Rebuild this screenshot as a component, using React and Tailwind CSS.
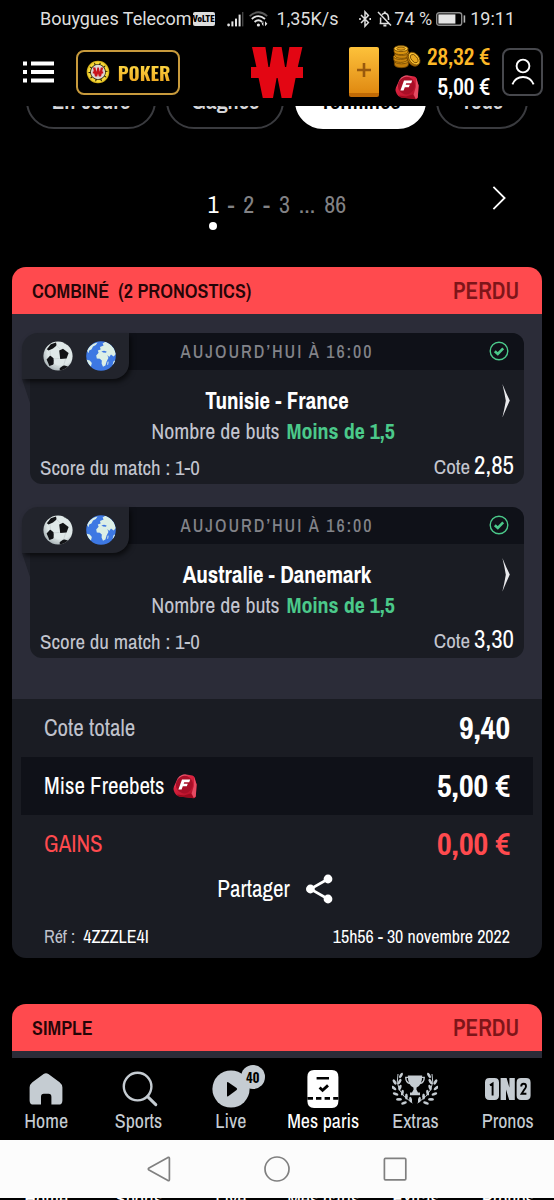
import React from "react";

function Ball() {
  return (
    <svg viewBox="0 0 30 30" className="size-[30px] shrink-0" aria-hidden="true">
      <defs>
        <clipPath id="ballClip"><circle cx="15" cy="15" r="14.6" /></clipPath>
        <radialGradient id="ballShade" cx="0.6" cy="0.35" r="0.75">
          <stop offset="0.6" stopColor="#dfe8e8" />
          <stop offset="1" stopColor="#98a2a6" />
        </radialGradient>
      </defs>
      <circle cx="15" cy="15" r="14.6" fill="url(#ballShade)" />
      <g clipPath="url(#ballClip)" fill="#121316">
        <path d="M16.2 9.6 20 7.8 25.6 12 23.6 17.6 17.2 18z" />
        <path d="M3.6 18.4 7.2 14.6 10.8 17.4 10.6 23.4 6.4 25z" />
        <path d="M3.8 8.2 7.8 3.2 13 1.6 13.6 4.4 10 7.4 5.6 9.6z" />
        <path d="M16.6 27.2 20.6 24.2 25 25.6 22 30.4 17 30.4z" />
        <path d="M20.4-.2 25.6 3 23.4 3.6 20.4 1.8z" />
      </g>
      <path d="M13.4 4.2 17.8 8.6M10.4 18 16.6 17.4M20.6 24.6 22.6 18M10 23.6 16.8 26.8M7.4 14.6 7 9.6" fill="none" stroke="#c6cfd1" strokeWidth="0.8" />
    </svg>
  );
}

function Globe() {
  return (
    <svg viewBox="0 0 30 30" className="size-[30px] shrink-0" aria-hidden="true">
      <defs>
        <clipPath id="globeClip"><circle cx="15" cy="15" r="14.8" /></clipPath>
      </defs>
      <circle cx="15" cy="15" r="14.8" fill="#3d78e3" />
      <g clipPath="url(#globeClip)" fill="#dcefe6">
        <path d="M10.2 14.4 12.6 11.8 11.8 9.4 14.6 8.6 14 6 17.6 4.6 16.6 2.6 19.4.8 24 3 28 7.4 30 13 27.6 15.4 25 13.4 23.2 16 21.4 14 22.4 17 20.6 20.6 19.4 24.4 17 25.8 15.6 22.4 15.8 19.6 13.8 17.8 10.8 17.6z" />
        <path d="M1 9.6 3.4 5.8 7.4 2.8 11.6 1.4 9.8 4 7 5.4 5.4 8.4 3.2 9.6 2.4 12.2z" />
        <path d="M0 18.4 3.8 19.4 5.8 22 5 25.4 3 24z" />
        <path d="M21.6 20.8 22.6 20.4 22.2 23.4 21.2 24z" />
        <path d="M27.4 20.6 29.6 19 28 23.4 26.6 24z" />
      </g>
      <path d="M15.4 10.6 18 9.8 20.6 10.6 20 11.8 17.2 11.4z" fill="#3d78e3" />
    </svg>
  );
}

function Freebet() {
  return (
    <svg viewBox="0 0 24 25" className="h-[25px] w-6 shrink-0" aria-hidden="true">
      <defs>
        <linearGradient id="gemBody" x1="0" y1="0" x2="0.7" y2="1">
          <stop offset="0" stopColor="#f58aa0" />
          <stop offset="0.4" stopColor="#dc2440" />
          <stop offset="1" stopColor="#b00d26" />
        </linearGradient>
      </defs>
      <path d="M8.4 1.2Q10.4.2 13 .4L19.4 1.4Q21 1.8 21.6 3.4L23.6 10.4 22.8 22.6Q22.4 24.4 20.4 24.2L16 23.8 6 22.4Q3 21.6 1.8 19L.6 16Q.2 14.4 1 12.4L4.6 4.4Q6 2 8.4 1.2z" fill="url(#gemBody)" />
      <path d="M21 3 23.6 10.4 22.8 22.6 20.8 24 18.6 19.4 20.8 12z" fill="#e64a62" />
      <path d="M4 20.4 11 21.4 17.8 19.6 20.4 24 6 22.4z" fill="#9a0a1e" />
      <ellipse cx="11.4" cy="10.6" rx="8.4" ry="8.8" transform="rotate(20 11.4 10.6)" fill="#a80f27" />
      <path d="M9 5.6H17.2L16.2 8.2H11.2L10.7 9.7H14.8L13.8 12.2H9.8L8.6 15.4H5.4z" fill="#fff" />
    </svg>
  );
}

function Coins() {
  return (
    <svg viewBox="0 0 28 24" className="h-6 w-7 shrink-0" aria-hidden="true">
      <g stroke="#6d4300" strokeWidth="0.8">
        <path d="M1.4 15.8v3.6c0 4.4 14 4.4 14 0v-3.6z" fill="#c07c0a" />
        <ellipse cx="8.4" cy="16" rx="7" ry="2.8" fill="#e9a51c" />
        <path d="M.6 11.4v3c0 4 14 4 14 0v-3z" fill="#c9850d" />
        <ellipse cx="7.6" cy="11.6" rx="7" ry="2.8" fill="#efac20" />
        <path d="M1.8 7.4v3c0 4 14 4 14 0v-3z" fill="#c9850d" />
        <ellipse cx="8.8" cy="7.6" rx="7" ry="2.8" fill="#f5b62a" />
        <path d="M1 3.6v3c0 4 14 4 14 0v-3z" fill="#d8930f" />
        <ellipse cx="8" cy="3.6" rx="7" ry="3" fill="#fbc538" />
        <ellipse cx="8" cy="3.6" rx="4.2" ry="1.6" fill="#e4a01a" />
        <ellipse cx="20" cy="14.6" rx="5" ry="7.4" transform="rotate(-38 20 14.6)" fill="#b87408" />
        <ellipse cx="21.2" cy="13.6" rx="4.8" ry="7.2" transform="rotate(-38 21.2 13.6)" fill="#f8be32" />
        <ellipse cx="21.2" cy="13.6" rx="2.8" ry="4.8" transform="rotate(-38 21.2 13.6)" fill="#e9a820" />
      </g>
    </svg>
  );
}

function StatusBar() {
  return (
    <div className="flex h-[38px] items-center justify-between whitespace-nowrap bg-black pl-10 pr-[39px] font-['Roboto',sans-serif] text-[18px] leading-6 text-[#dedede]">
      <div className="flex items-center">
        <span>Bouygues Telecom</span>
        <span className="ml-px flex h-[14px] w-[22px] items-center justify-center rounded-xs bg-[#dedede] font-['Roboto_Condensed',sans-serif] text-[9px] font-black leading-none text-black">VoLTE</span>
        <svg viewBox="0 0 42 18" className="ml-3 h-[18px] w-[42px]" aria-hidden="true">
          <g fill="#e4e4e4">
            <circle cx="1.6" cy="15" r="1.4" />
            <rect x="4.4" y="11.4" width="2" height="5" />
            <rect x="8" y="8.6" width="2" height="7.8" />
            <rect x="11.6" y="4.6" width="2" height="11.8" />
            <rect x="15" y="2" width="1.4" height="14.4" fill="#444" />
          </g>
          <g fill="none" strokeWidth="1.8">
            <path d="M22.6 6.2Q31.4-1.6 40.2 6.2" stroke="#5a5a5a" />
            <path d="M24.8 9Q31.4 3.2 38 9" stroke="#e4e4e4" />
            <path d="M27.6 12Q31.4 8.6 35.2 12" stroke="#e4e4e4" />
          </g>
          <circle cx="31.4" cy="15" r="1.6" fill="#e4e4e4" />
          <path d="M36.4 11.2v5l-1.8-2.5zM38 11.2v5l2.4-2.5z" fill="#e4e4e4" />
        </svg>
        <span className="ml-2">1,35K/s</span>
      </div>
      <div className="flex items-center">
        <svg viewBox="0 0 34 18" className="h-[18px] w-[34px]" aria-hidden="true">
          <g fill="none" stroke="#dedede" strokeWidth="1.5">
            <path d="M3 5 10.4 12.6 7 16.2V1.8L10.4 5.4 3 13" />
            <path d="M1.2 9h1.6M11.4 9H13" strokeWidth="2" />
            <path d="M20 2 33 15.4M21.6 13.4H31M22.6 13V7.6M24 4.6Q26.6 2 29.4 4.4 30.6 5.6 30.6 10" />
            <path d="M25.4 15.6H28.4M26.8 1.6V3" strokeWidth="2" />
          </g>
        </svg>
        <span className="ml-0.5">74 %</span>
        <svg viewBox="0 0 30 14" className="ml-1 h-3.5 w-[30px]" aria-hidden="true">
          <rect x="0.7" y="0.7" width="25" height="12.6" rx="2.4" fill="none" stroke="#8d8d8d" strokeWidth="1.4" />
          <rect x="2.4" y="2.4" width="17" height="9.2" fill="#e4e4e4" />
          <rect x="27.6" y="3.4" width="1.6" height="7.2" fill="#b5b5b5" />
        </svg>
        <span className="ml-1">19:11</span>
      </div>
    </div>
  );
}

function Header() {
  return (
    <header className="grid h-[68px] grid-cols-[1fr_auto_1fr] items-center bg-black px-[11px]">
      <div className="flex items-center pl-3">
        <button aria-label="Menu">
          <svg viewBox="0 0 31 22" className="h-[22px] w-[31px]" fill="#fff" aria-hidden="true">
            <path d="M0 .4h4v4H0zM8 .4h23v4H8zM0 9h4v4H0zM8 9h23v4H8zM0 17.6h4v4H0zM8 17.6h23v4H8z" />
          </svg>
        </button>
        <a href="#poker" className="ml-[22px] flex h-[45px] w-[104px] items-center justify-center gap-2 rounded-lg border-2 border-[#c79a3c] font-['Oswald',sans-serif]">
          <svg viewBox="0 0 24 24" className="size-6" aria-hidden="true">
            <circle cx="12" cy="12" r="10.4" fill="#1a1400" stroke="#d9b41c" strokeWidth="1.8" />
            <circle cx="12" cy="12" r="9" fill="none" stroke="#f4d83a" strokeWidth="2.4" strokeDasharray="4.6 1" />
            <circle cx="12" cy="12" r="7.2" fill="#ddd6d2" />
            <path d="M7 7.6h2.4l1 4.2 1-4.2h1.4l1 4.2 1-4.2H17.2l-1 4h1v1.8h-1.4l-.8 3.2h-2.2l-.8-3.2-.8 3.2H9l-.8-3.2H6.8v-1.8h1z" fill="#c9141c" />
          </svg>
          <span className="bg-gradient-to-b from-[#ffe14a] to-[#eda41c] bg-clip-text text-[19px] font-bold leading-6 text-transparent">POKER</span>
        </a>
      </div>
      <a href="#accueil" aria-label="Winamax">
        <svg viewBox="0 0 52 51" className="h-[51px] w-[52px]" fill="#e30613" aria-hidden="true">
          <path d="M1 0H14.4L17.4 20H18.6L22 0H30.6L34 20H35.2L38.4 0H51.4L46.8 20H52V31H44.6L40.6 51H30.6L26.6 31H25.6L22 51H11.8L7.6 31H0V20H5.4z" />
        </svg>
      </a>
      <div className="flex items-center justify-end">
        <button aria-label="Déposer" className="flex h-[50px] w-[30px] items-center justify-center rounded-xs border-b-4 border-[#c06a05] bg-gradient-to-b from-[#fdc23a] to-[#e08a10]">
          <svg viewBox="0 0 14 14" className="size-3.5" aria-hidden="true"><path d="M7 0V14M0 7H14" stroke="#99590d" strokeWidth="2.6" /></svg>
        </button>
        <div className="ml-3.5 grid grid-cols-[28px_auto] items-center gap-x-1.5 text-right text-[23px] font-semibold leading-[30px]">
          <Coins />
          <span className="whitespace-nowrap text-[#fdb827]">28,32 €</span>
          <span className="pl-0.5"><Freebet /></span>
          <span className="whitespace-nowrap text-white">5,00 €</span>
        </div>
        <button aria-label="Mon compte" className="ml-3 flex h-12 w-[41px] shrink-0 items-center justify-center rounded-lg border-2 border-[#47484d]">
          <svg viewBox="0 0 24 28" className="h-7 w-6" fill="none" stroke="#fff" strokeWidth="1.9" aria-hidden="true">
            <circle cx="12" cy="8" r="6.4" />
            <path d="M1.4 26.4Q4.4 19 12 19 19.6 19 22.6 26.4" />
          </svg>
        </button>
      </div>
    </header>
  );
}

function Tabs() {
  const base = "h-14 rounded-full border-2 text-[23px] font-semibold leading-6";
  return (
    <div className="flex h-[23px] items-end justify-between overflow-hidden px-[26px]">
      <button className={`${base} w-[130px] border-[#3a3b3f] text-[#d5d5d8]`}>En cours</button>
      <button className={`${base} w-[118px] border-[#3a3b3f] text-[#d5d5d8]`}>Gagnés</button>
      <button className={`${base} w-[131px] border-white bg-white text-black`}>Terminés</button>
      <button className={`${base} w-[92px] border-[#3a3b3f] text-[#d5d5d8]`}>Tous</button>
    </div>
  );
}

function Pagination() {
  return (
    <nav aria-label="Pagination" className="grid grid-cols-[1fr_auto_1fr] px-12 pb-[37px] pt-[57px]">
      <div className="col-start-2 flex gap-[9px] text-[24px] leading-9 text-[#828285]">
        <a href="#p1" aria-current="page" className="flex flex-col items-center text-white">
          1<span className="size-2 rounded-full bg-white" />
        </a>
        <span>-</span><a href="#p2">2</a><span>-</span><a href="#p3">3</a>
        <span>...</span>
        <a href="#p86">86</a>
      </div>
      <button aria-label="Suivant" className="flex h-6 justify-end">
        <svg viewBox="0 0 14 24" className="h-6 w-3.5" fill="none" stroke="#fff" strokeWidth="1.8" aria-hidden="true"><path d="M1.4.8 12.6 12 1.4 23.2" /></svg>
      </button>
    </nav>
  );
}

function BetHeader({ title }) {
  return (
    <div className="flex h-[47px] items-center justify-between bg-[#ff4a4e] pl-5 pr-[23px]">
      <h2 className="whitespace-pre text-[20px] font-semibold leading-6 text-[#250507]">{title}</h2>
      <span className="text-[23px] font-semibold leading-6 text-[#7e1519]">PERDU</span>
    </div>
  );
}

function Pick({ match, odds }) {
  return (
    <article className="relative rounded-xl bg-[#1a1c23]">
      <div className="flex h-[37px] items-center justify-center rounded-t-xl bg-[#0f1118] text-[18px] font-medium leading-6 tracking-[2px] text-[#828389]">
        AUJOURD’HUI À 16:00
      </div>
      <svg viewBox="0 0 20 20" className="absolute right-[15px] top-2 size-5" fill="none" stroke="#4bc98a" aria-hidden="true">
        <circle cx="10" cy="10" r="8.8" strokeWidth="1.4" />
        <path d="M5.8 10.2 8.8 13 14.2 7.4" strokeWidth="2.6" />
      </svg>
      <svg viewBox="0 0 8 24" className="absolute -left-2 top-[46px] h-6 w-2" aria-hidden="true"><path d="M0 0H8V24z" fill="#20222b" /></svg>
      <div className="absolute -left-2 top-0 flex h-[46px] w-[107px] items-center justify-center gap-[13px] rounded-br-2xl rounded-tl-2xl bg-[#22242c] pl-2 shadow-[2px_3px_5px_rgba(0,0,0,0.6)]">
        <Ball />
        <Globe />
      </div>
      <a href="#match" className="block px-2.5 pt-[15px] text-center">
        <h3 className="text-[23px] font-bold leading-[31px] text-white">{match}</h3>
        <p className="pr-2 text-[22px] leading-[31px] text-[#c3c5cf]">
          Nombre de buts <b className="ml-0.5 font-bold text-[#4bc98a]">Moins de 1,5</b>
        </p>
        <div className="flex h-[37px] items-center justify-between text-[21px] leading-9 text-[#c3c5cf]">
          <span className="pt-1">Score du match : 1-0</span>
          <span className="flex items-baseline gap-1">Cote <b className="text-[25px] font-normal text-white">{odds}</b></span>
        </div>
        <svg viewBox="0 0 8 34" className="absolute right-3.5 top-[51px] h-[34px] w-2" fill="#e9e9ec" aria-hidden="true"><path d="M.4 0Q4 9 7.8 16.6 4 25 .4 33.6 2.6 24 3.8 16.8 2.6 9 .4 0z" /></svg>
      </a>
    </article>
  );
}

function Totals() {
  const row = "flex h-[58px] items-center justify-between px-[23px]";
  const value = "text-[32px] font-bold leading-9";
  return (
    <div className="bg-[#1a1c23] px-[9px]">
      <dl className="text-[23px] leading-7">
        <div className={`${row} text-[#bfc1cb]`}><dt>Cote totale</dt><dd className={`${value} text-white`}>9,40</dd></div>
        <div className={`${row} bg-[#0f1118] text-white`}>
          <dt className="flex items-center gap-2">Mise Freebets <Freebet /></dt>
          <dd className={value}>5,00 €</dd>
        </div>
        <div className={`${row} text-[#ff4a4e]`}><dt>GAINS</dt><dd className={value}>0,00 €</dd></div>
      </dl>
      <button className="flex h-8 w-full items-center justify-center gap-4 pr-1 text-[23px] leading-8 text-white">
        Partager
        <svg viewBox="0 0 27 30" className="h-[30px] w-[27px]" aria-hidden="true">
          <path d="M22 5 4.4 15 22 25" fill="none" stroke="#fff" strokeWidth="2.6" />
          <g fill="#fff"><circle cx="22" cy="5" r="4.4" /><circle cx="4.4" cy="15" r="4.4" /><circle cx="22" cy="25" r="4.4" /></g>
        </svg>
      </button>
      <div className="flex items-center justify-between px-[23px] pb-[9px] pt-5 text-[18px] leading-6 text-white">
        <span><span className="mr-1 text-[#bfc1cb]">Réf :</span> 4ZZZLE4I</span>
        <time>15h56 - 30 novembre 2022</time>
      </div>
    </div>
  );
}

const leaves = [
  [2.6, 11, 60], [1.8, 17, 40], [3.6, 23, 20], [7, 28.4, 0], [12, 32, -20],
  [9, 4.4, -60], [7.6, 10.6, -60], [8, 16.6, -70], [10.4, 21.6, -80], [14.4, 25.4, -90], [18.6, 28.6, -100],
];

function Laurel() {
  return (
    <g>
      <path d="M6 3Q1.6 20 20.4 32" fill="none" stroke="#c5ccd2" strokeWidth="1" />
      {leaves.map(([x, y, a]) => (
        <ellipse key={`${x}-${y}`} cx={x} cy={y} rx="3" ry="1.4" transform={`rotate(${a} ${x} ${y})`} fill="#c5ccd2" />
      ))}
    </g>
  );
}

function BottomNav() {
  const item = "flex flex-1 flex-col items-center";
  const icon = "flex h-10 items-center justify-center";
  return (
    <nav aria-label="Principale" className="flex h-[82px] bg-black pt-[11px] text-[20px] leading-6 text-[#c5ccd2]">
      <a href="#home" className={item}>
        <span className={icon}>
          <svg viewBox="0 0 34 32" className="h-8 w-[34px]" aria-hidden="true">
            <path d="M14.6 1Q17 -.4 19.4 1L30.6 9.2Q33.4 11.4 33.4 14.6V27.4Q33.4 31.6 29.4 31.6H22.4V24Q22.4 20.8 19.6 20.8H14.8Q12 20.8 12 24V31.6H4.6Q.6 31.6.6 27.4V14.6Q.6 11.4 3.4 9.2z" fill="#c5ccd2" />
          </svg>
        </span>
        Home
      </a>
      <a href="#sports" className={item}>
        <span className={`${icon} pl-1`}>
          <svg viewBox="0 0 36 36" className="size-9" fill="none" stroke="#c5ccd2" aria-hidden="true">
            <circle cx="15.6" cy="15.6" r="13.8" strokeWidth="2.4" />
            <path d="M25.6 25.6 33.8 33.6" strokeWidth="3" strokeLinecap="round" />
          </svg>
        </span>
        Sports
      </a>
      <a href="#live" className={item}>
        <span className={`${icon} relative`}>
          <svg viewBox="0 0 38 38" className="size-[38px]" aria-hidden="true">
            <circle cx="19" cy="19" r="18.6" fill="#c5ccd2" />
            <path d="M15 12.6Q15 11.4 16.2 12.2L24.6 18Q25.6 19 24.6 20L16.2 26.2Q15 27 15 25.6z" fill="#000" />
          </svg>
          <span className="absolute -right-[15px] -top-1 flex size-6 items-center justify-center rounded-full bg-[#c5ccd2] font-['Oswald',sans-serif] text-[13px] font-semibold leading-none text-black">40</span>
        </span>
        Live
      </a>
      <a href="#paris" aria-current="page" className={`${item} text-white`}>
        <span className={icon}>
          <svg viewBox="0 0 32 38" className="h-[38px] w-8" aria-hidden="true">
            <path d="M7 0H25Q31.4 0 31.4 7V31Q31.4 38 25 38H7Q.4 38 .4 31V7Q.4 0 7 0z" fill="#fff" />
            <path d="M.4 28.4H6M9 28.4H14.4M17.6 28.4H23M26.2 28.4H31.4M9.6 8.2H22" stroke="#000" strokeWidth="2.6" />
            <path d="M12.6 17.4 15.6 20.4 21 15.4" fill="none" stroke="#000" strokeWidth="2.8" />
          </svg>
        </span>
        Mes paris
      </a>
      <a href="#extras" className={item}>
        <span className={icon}>
          <svg viewBox="0 0 46 36" className="h-9 w-[46px]" aria-hidden="true">
            <Laurel />
            <g transform="translate(46 0) scale(-1 1)"><Laurel /></g>
            <g fill="#c5ccd2">
              <path d="M15.8 4.4H30.2Q30.2 14 24.6 16.6L24.4 18.6 26 21.6H28V24.2H18V21.6H20L21.6 18.6 21.4 16.6Q15.8 14 15.8 4.4z" />
              <path d="M16 6.4H13.8Q13.8 11.4 18 12.6M30 6.4H32.2Q32.2 11.4 28 12.6" fill="none" stroke="#c5ccd2" strokeWidth="1.4" />
            </g>
          </svg>
        </span>
        Extras
      </a>
      <a href="#pronos" className={item}>
        <span className={icon}>
          <svg viewBox="0 0 46 24" className="h-6 w-[46px]" aria-hidden="true">
            <g fill="#c5ccd2">
              <path d="M4.4 1H9.6Q14 1 14 5.4V18.6Q14 23 9.6 23H4.4Q0 23 0 18.6V5.4Q0 1 4.4 1zM15.6 1H21.6L24.4 10.4V1H29.8V23H24.2L21 12.6V23H15.6zM36 1H41.2Q45.6 1 45.6 5.4V18.6Q45.6 23 41.2 23H36Q31.6 23 31.6 18.6V5.4Q31.6 1 36 1z" />
            </g>
            <path d="M5 8.4 7.6 6.6V18.4M36.2 9.4Q36.2 6.8 38.6 6.8 41 6.8 41 9.2 41 11 39 13L36.6 16.8H41.4" fill="none" stroke="#000" strokeWidth="1.9" />
          </svg>
        </span>
        Pronos
      </a>
    </nav>
  );
}

function SystemBar() {
  return (
    <div className="flex h-[58px] items-center justify-center gap-[93px] bg-[#fcfcfc] text-[#808080]">
      <button aria-label="Retour">
        <svg viewBox="0 0 24 26" className="h-[26px] w-6" fill="none" stroke="currentColor" strokeWidth="1.7" strokeLinejoin="round" aria-hidden="true"><path d="M21 1.4Q22.4.8 22.4 2.4V23.6Q22.4 25.2 21 24.6L2 14Q.6 13 2 12z" /></svg>
      </button>
      <button aria-label="Accueil">
        <svg viewBox="0 0 26 26" className="size-[26px]" fill="none" stroke="currentColor" strokeWidth="1.7" aria-hidden="true"><circle cx="13" cy="13" r="12" /></svg>
      </button>
      <button aria-label="Applications récentes">
        <svg viewBox="0 0 24 24" className="size-6" fill="none" stroke="currentColor" strokeWidth="1.7" aria-hidden="true"><rect x="1.4" y="1.4" width="21.4" height="21.4" rx="1" /></svg>
      </button>
    </div>
  );
}

export default function App() {
  return (
    <div className="flex min-h-screen flex-col bg-black font-['Archivo_Narrow','Roboto_Condensed',sans-serif]">
      <StatusBar />
      <Header />
      <main className="flex-1">
        <Tabs />
        <Pagination />
        <section className="mx-3 overflow-hidden rounded-[14px]">
          <BetHeader title={"COMBINÉ  (2 PRONOSTICS)"} />
          <div className="flex flex-col gap-[23px] bg-[#2b2c38] px-[18px] pb-[41px] pt-[19px]">
            <Pick match="Tunisie - France" odds="2,85" />
            <Pick match="Australie - Danemark" odds="3,30" />
          </div>
          <Totals />
        </section>
        <section className="mx-3 mt-[46px] overflow-hidden rounded-t-[14px]">
          <BetHeader title="SIMPLE" />
          <div className="h-[7px] bg-[#2b2c38]" />
        </section>
      </main>
      <BottomNav />
      <SystemBar />
      <div aria-hidden="true" className="flex h-0.5 items-center overflow-hidden bg-black text-center text-[20px] leading-6 text-white">
        {["Home", "Sports", "Live", "Mes paris", "Extras", "Pronos"].map((label) => (
          <span key={label} className="flex-1">{label}</span>
        ))}
      </div>
    </div>
  );
}
